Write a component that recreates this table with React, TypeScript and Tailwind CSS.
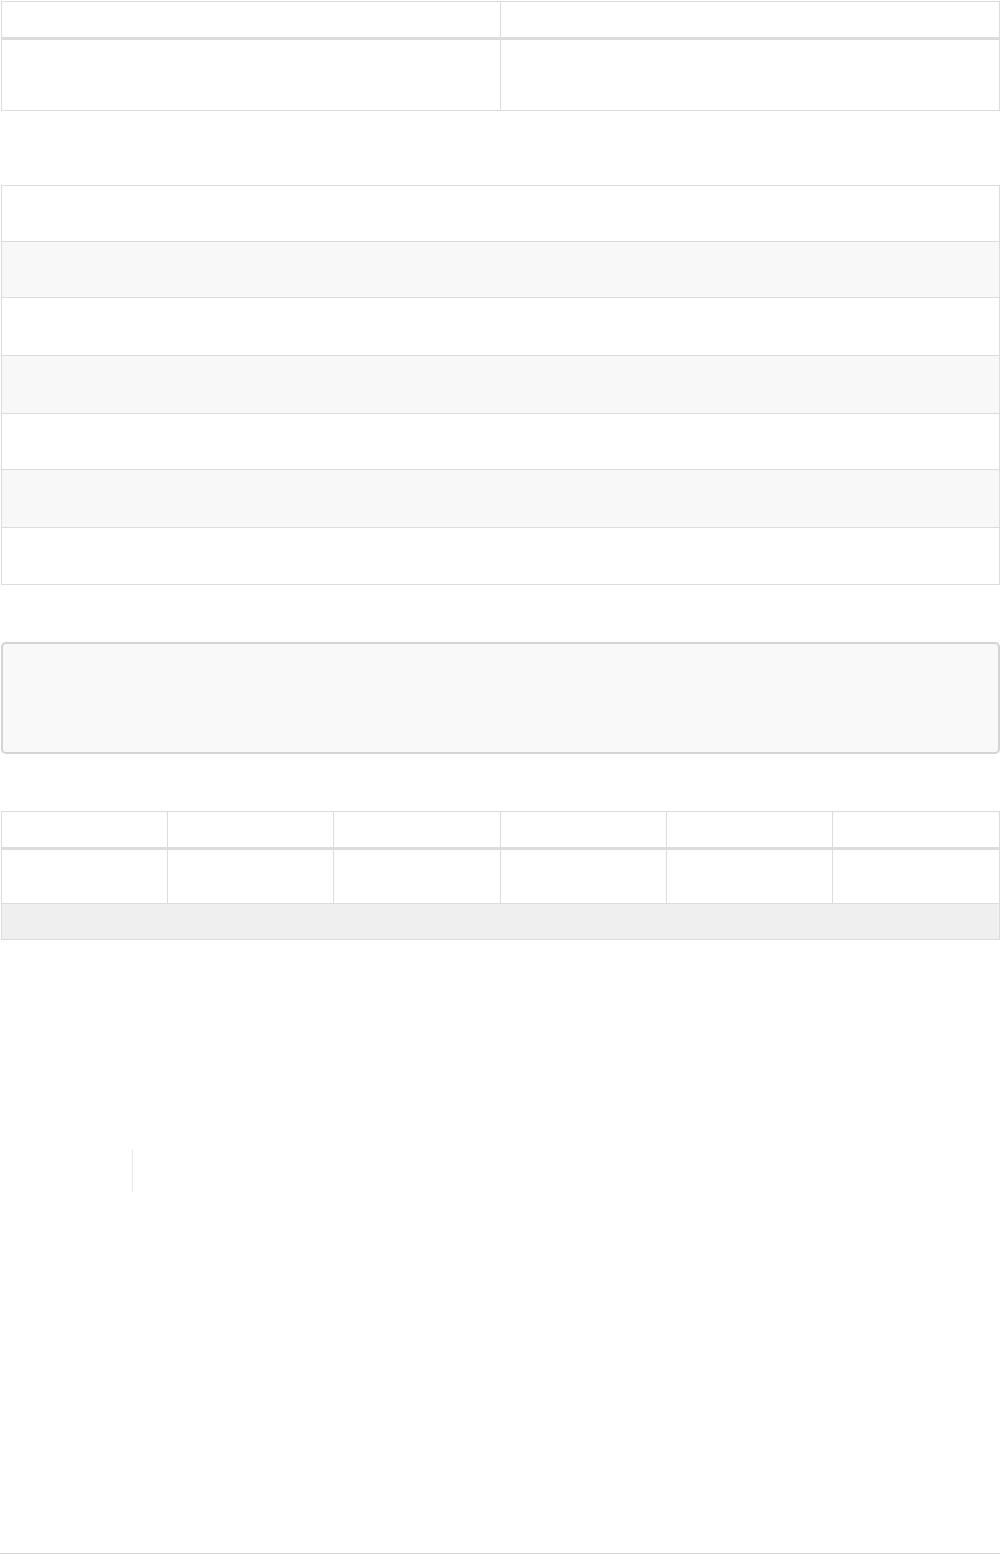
export default function App() {
  const stripes = [56, 56, 58, 58, 56, 58, 57];
  const cols = [0, 1, 2, 3, 4, 5];

  return (
    <div className="relative h-[1554px] w-[1000px] bg-white font-['Liberation_Sans',sans-serif]">
      <div className="flex flex-col pl-[1px] pt-[1px]">
        {/* two column table */}
        <div className="border border-[#dcdcdc]">
          <div className="grid h-[35px] grid-cols-2">
            <div className="border-r border-[#dcdcdc]" />
            <div />
          </div>
          <div className="h-[3px] bg-[#dcdcdc]" />
          <div className="grid h-[70px] grid-cols-2">
            <div className="border-r border-[#dcdcdc]" />
            <div />
          </div>
        </div>

        {/* striped list */}
        <div className="mt-[74px] border-x border-b border-[#dcdcdc]">
          {stripes.map((h, i) => (
            <div
              key={i}
              style={{ height: h }}
              className={
                "border-t border-[#dcdcdc] " + (i % 2 === 1 ? "bg-[#f8f8f8]" : "bg-white")
              }
            />
          ))}
        </div>

        {/* note box */}
        <div className="mt-[57px] h-[112px] rounded-[5px] border-2 border-[#d4d4d4] bg-[#f9f9f9]" />

        {/* six column table */}
        <div className="mt-[57px] border border-[#dcdcdc]">
          <div className="grid h-[35px] grid-cols-6">
            {cols.map((c) => (
              <div key={c} className={c < 5 ? "border-r border-[#dcdcdc]" : ""} />
            ))}
          </div>
          <div className="h-[3px] bg-[#dcdcdc]" />
          <div className="grid h-[53px] grid-cols-6">
            {cols.map((c) => (
              <div key={c} className={c < 5 ? "border-r border-[#dcdcdc]" : ""} />
            ))}
          </div>
          <div className="h-[36px] border-t border-[#dcdcdc] bg-[#efefef]" />
        </div>

        {/* caret-like divider */}
        <div className="ml-[131px] mt-[210px] h-[42px] w-px bg-[#e6e6e6]" />
      </div>

      <div className="absolute bottom-0 left-0 h-px w-full bg-[#d6d6d6]" />
    </div>
  );
}
